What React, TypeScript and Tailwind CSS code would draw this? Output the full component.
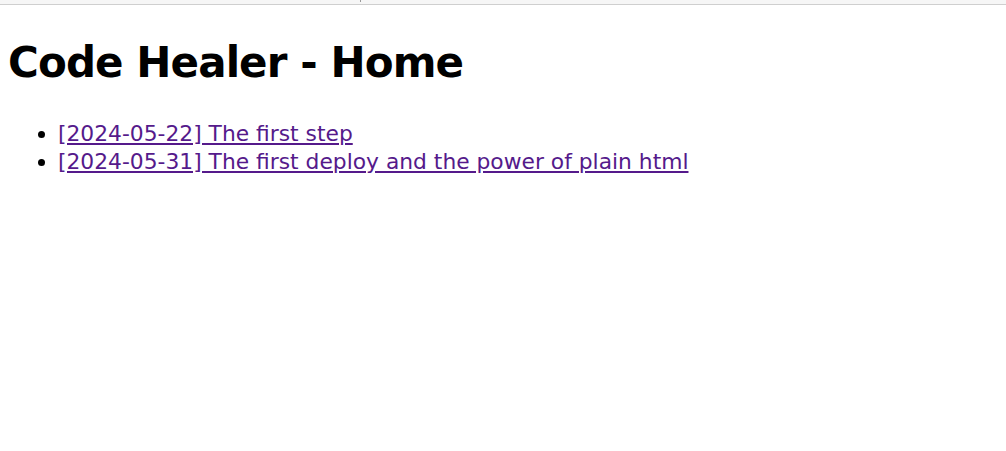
export default function App() {
  return (
    <div className="min-h-screen bg-white font-['DejaVu_Sans',sans-serif] text-black">
      <div className="flex h-[5px] items-start border-b border-[#cfcfcf] bg-[#f6f6f6]">
        <span className="ml-[360px] h-[2px] w-px bg-[#9a9a9a]" />
      </div>
      <div className="px-2">
        <h1 className="mt-[34px] text-[42px] font-bold leading-[48px] tracking-[-0.9px]">
          Code Healer - Home
        </h1>
        <ul className="mt-[33px] list-disc pl-[50px] text-[21.8px] leading-[28px]">
          <li>
            <a href="#" className="text-[#551a8b] underline">
              [2024-05-22] The first step
            </a>
          </li>
          <li>
            <a href="#" className="text-[#551a8b] underline">
              [2024-05-31] The first deploy and the power of plain html
            </a>
          </li>
        </ul>
      </div>
    </div>
  );
}
